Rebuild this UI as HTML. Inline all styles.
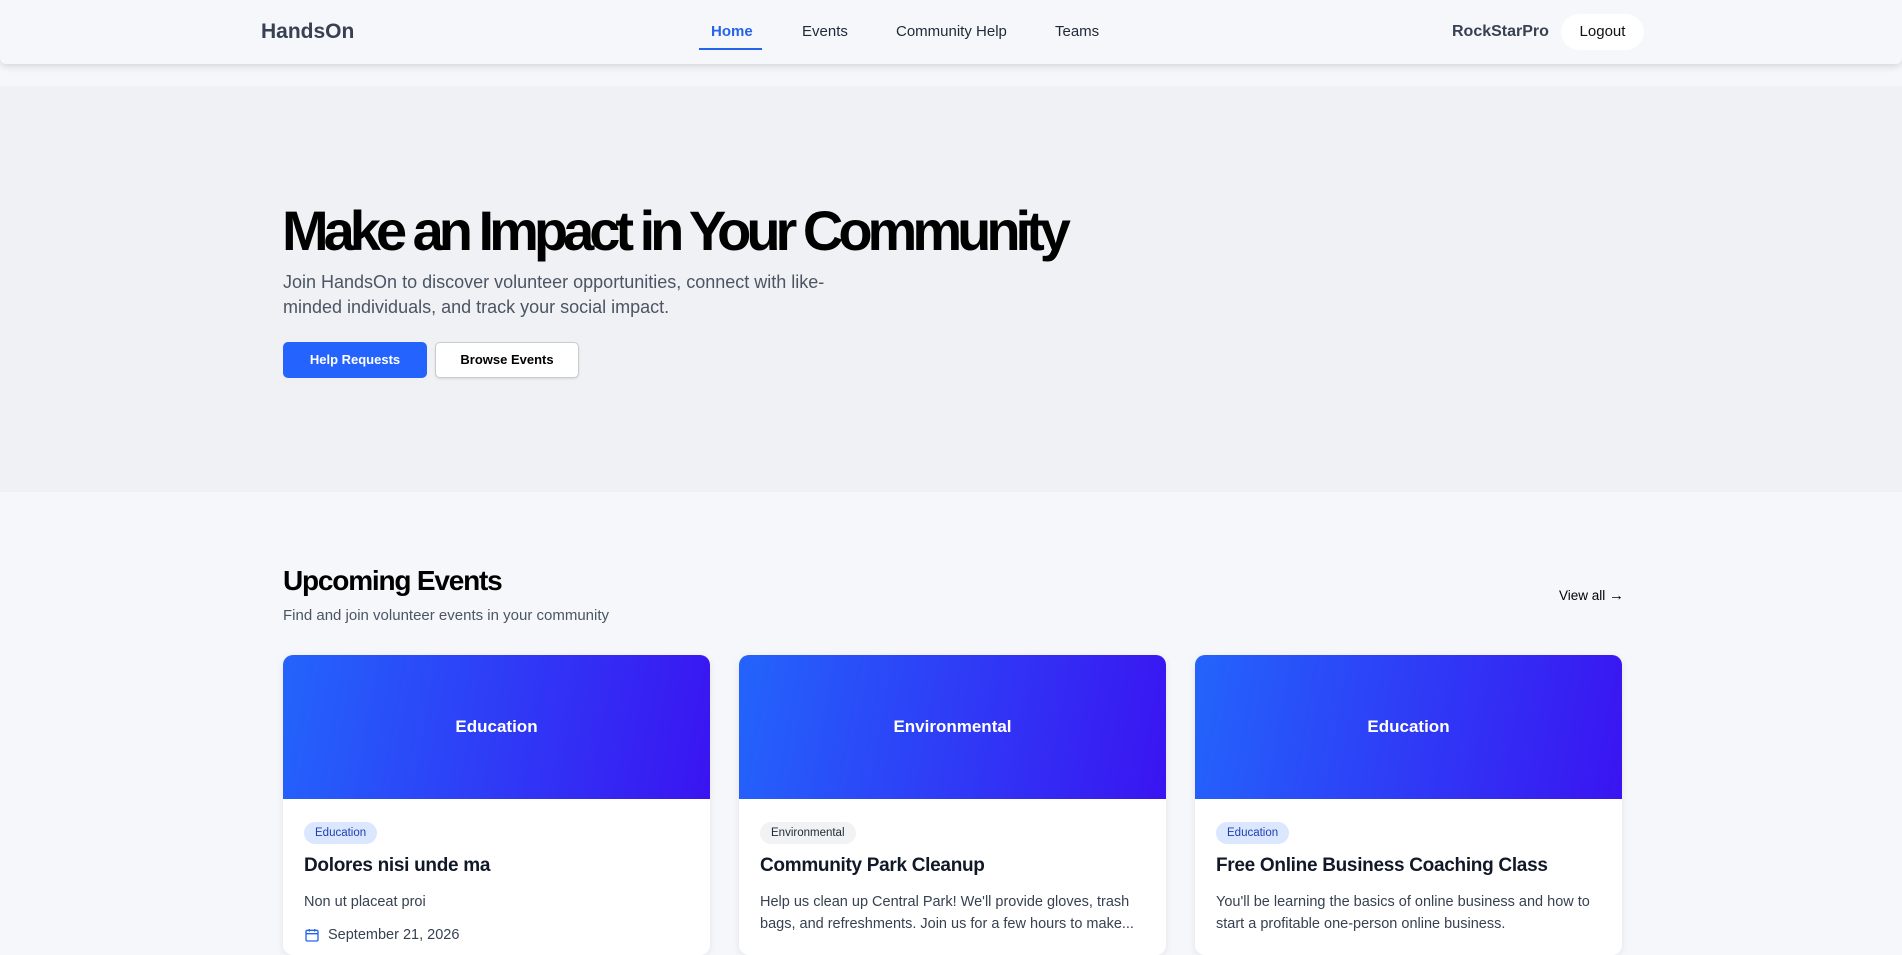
<!DOCTYPE html>
<html><head><meta charset="utf-8"><style>
*{margin:0;padding:0;box-sizing:border-box}
body{width:1902px;height:933px;overflow:hidden;background:#f6f7fb;font-family:"Liberation Sans",sans-serif;position:relative}
.nav{position:absolute;left:0;top:0;width:1902px;height:64px;background:#f6f7fb;box-shadow:0 2px 8px rgba(0,0,0,.15);border-radius:0 0 6px 6px}
.abs{position:absolute;white-space:nowrap}
.hero{position:absolute;left:0;top:86px;width:1902px;height:406px;background:#eff1f5}
.card{position:absolute;top:655px;width:427px;height:300px;background:#fff;border-radius:10px;overflow:hidden;box-shadow:0 2px 8px rgba(0,0,0,.08)}
.img{height:144px;background:linear-gradient(100deg,#2364fb,#3a14f1);color:#fff;font-weight:bold;font-size:17px;display:flex;align-items:center;justify-content:center}
.badge{position:absolute;left:21px;top:167px;height:22px;padding:0 11px;border-radius:11px;font-size:11.5px;line-height:22px}
.t{position:absolute;left:21px;top:200px;font-size:19px;font-weight:bold;color:#111827;letter-spacing:-.3px}
.d{position:absolute;left:21px;top:236px;width:390px;font-size:14.5px;line-height:22px;color:#374151}
.dt{position:absolute;left:21px;top:272px;font-size:14.5px;color:#374151;display:flex;align-items:center;gap:8px}
</style></head><body>
<div class="nav"></div>
<div class="abs" style="left:261px;top:20px;font-size:21px;font-weight:bold;color:#374151">HandsOn</div>
<div class="abs" style="left:711px;top:23px;font-size:15px;color:#2563eb;font-weight:bold">Home</div>
<div class="abs" style="left:699px;top:48px;width:63px;height:2px;background:#2563eb"></div>
<div class="abs" style="left:802px;top:23px;font-size:15px;color:#1f2937">Events</div>
<div class="abs" style="left:896px;top:23px;font-size:15px;color:#1f2937">Community Help</div>
<div class="abs" style="left:1055px;top:23px;font-size:15px;color:#1f2937">Teams</div>
<div class="abs" style="left:1452px;top:23px;font-size:16px;font-weight:bold;color:#374151">RockStarPro</div>
<div class="abs" style="left:1561px;top:14px;width:83px;height:36px;background:#fff;border-radius:18px;font-size:15px;line-height:36px;text-align:center;color:#111">Logout</div>
<div class="hero"></div>
<div class="abs" style="left:282px;top:198px;font-size:56px;font-weight:bold;letter-spacing:-5px;color:#000">Make an Impact in Your Community</div>
<div class="abs" style="left:283px;top:270px;font-size:18px;line-height:25px;color:#4b5563;white-space:normal;width:560px">Join HandsOn to discover volunteer opportunities, connect with like-minded individuals, and track your social impact.</div>
<div class="abs" style="left:283px;top:342px;width:144px;height:36px;background:#2563ff;border-radius:5px;color:#fff;font-size:13px;font-weight:bold;line-height:36px;text-align:center">Help Requests</div>
<div class="abs" style="left:435px;top:342px;width:144px;height:36px;background:#fff;border:1px solid #ccc;border-radius:5px;color:#000;font-size:13px;font-weight:bold;line-height:34px;text-align:center;box-shadow:0 1px 2px rgba(0,0,0,.1)">Browse Events</div>
<div class="abs" style="left:283px;top:565px;font-size:28px;font-weight:bold;letter-spacing:-1.2px;color:#000">Upcoming Events</div>
<div class="abs" style="left:283px;top:607px;font-size:15px;color:#4b5563">Find and join volunteer events in your community</div>
<div class="abs" style="left:1559px;top:587px;font-size:13.5px;color:#000">View all <span style="font-size:15px">→</span></div>
<div class="card" style="left:283px"><div class="img">Education</div>
<div class="badge" style="background:#dbe7fe;color:#1e40af">Education</div>
<div class="t">Dolores nisi unde ma</div><div class="d">Non ut placeat proi</div>
<div class="dt"><svg width="16" height="16" viewBox="0 0 24 24" fill="none" stroke="#2563eb" stroke-width="2"><rect x="3" y="5" width="18" height="16" rx="2"/><path d="M3 10h18M8 3v4M16 3v4"/></svg>September 21, 2026</div></div>
<div class="card" style="left:739px"><div class="img">Environmental</div>
<div class="badge" style="background:#f1f2f4;color:#1f2937">Environmental</div>
<div class="t">Community Park Cleanup</div><div class="d">Help us clean up Central Park! We'll provide gloves, trash bags, and refreshments. Join us for a few hours to make...</div></div>
<div class="card" style="left:1195px"><div class="img">Education</div>
<div class="badge" style="background:#dbe7fe;color:#1e40af">Education</div>
<div class="t">Free Online Business Coaching Class</div><div class="d">You'll be learning the basics of online business and how to start a profitable one-person online business.</div></div>
</body></html>
